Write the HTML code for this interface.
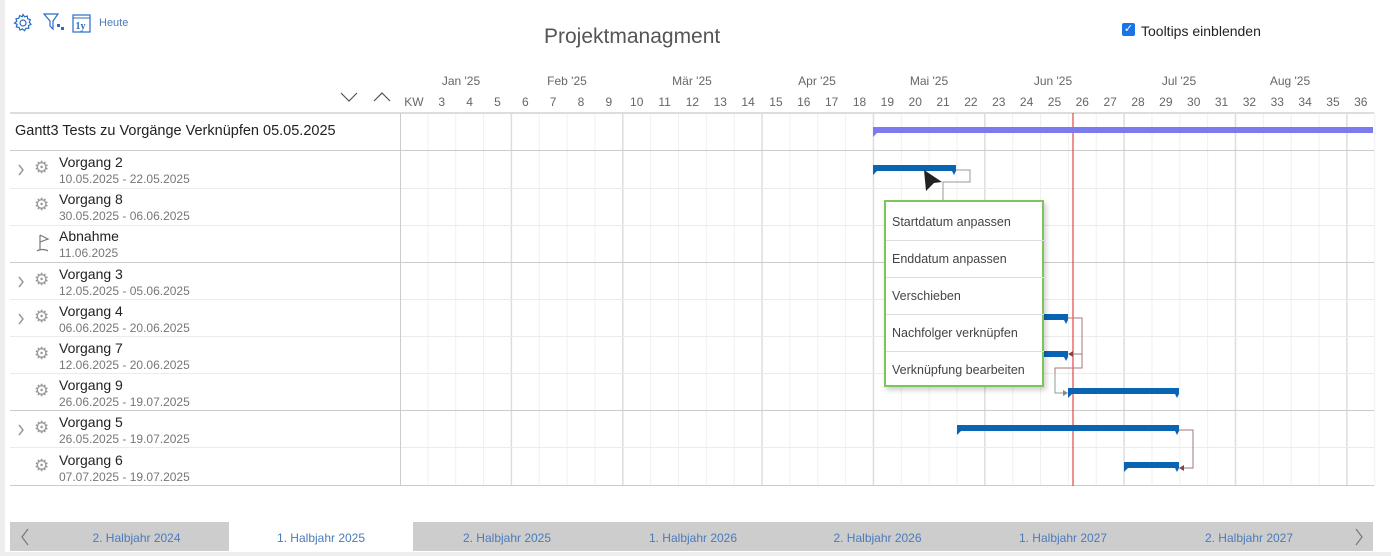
<!DOCTYPE html>
<html><head><meta charset="utf-8"><style>
body{margin:0;width:1391px;height:556px;overflow:hidden;background:#fff;font-family:"Liberation Sans",sans-serif;position:relative}
.a{position:absolute;white-space:nowrap}
.n{font-size:14px;color:#222}
.d{font-size:12px;color:#777}
.mi{position:absolute;left:0;width:158px;height:37px;line-height:37px;padding-left:6px;font-size:12.5px;color:#444;border-top:1px solid #ddd;box-sizing:border-box}
.nav{position:absolute;top:522px;height:29px;line-height:33px;font-size:12px;color:#4a7bbd;text-align:center}
</style></head><body>
<div class="a" style="left:0;top:0;width:5px;height:556px;background:#eee"></div>
<div class="a" style="left:0;top:552px;width:1391px;height:4px;background:#eee"></div>
<svg class="a" style="left:13px;top:13px" width="20" height="20" viewBox="0 0 20 20"><path d="M10 1.5l1.6 2.3 2.7-.8.4 2.8 2.7.9-1.2 2.5 1.8 2.1-2.5 1.3.2 2.8-2.8-.2-1.3 2.5-2.1-1.8-2.5 1.2-.9-2.7-2.8-.4.8-2.7L1.5 10l2.3-1.6-.8-2.7 2.8-.4.9-2.7 2.5 1.2z" fill="none" stroke="#2b6cc4" stroke-width="1.2"/><circle cx="10" cy="10" r="3" fill="none" stroke="#2b6cc4" stroke-width="1.2"/></svg>
<svg class="a" style="left:43px;top:13px" width="22" height="20" viewBox="0 0 22 20"><path d="M1 1h14l-5 7v8l-3-3V8z" fill="none" stroke="#2b6cc4" stroke-width="1.2"/><rect x="14" y="11" width="3" height="3" fill="#2b6cc4"/><rect x="18" y="14" width="3" height="3" fill="#2b6cc4"/></svg>
<svg class="a" style="left:72px;top:13px" width="20" height="20" viewBox="0 0 20 20"><rect x="1" y="2" width="17" height="17" fill="none" stroke="#2b6cc4" stroke-width="1.2"/><line x1="1" y1="5" x2="18" y2="5" stroke="#2b6cc4"/><text x="3.5" y="16" font-size="10" font-weight="bold" fill="#2b6cc4" font-family="Liberation Serif">1y</text></svg>
<div class="a" style="left:99px;top:17px;font-size:11px;color:#4a7bbd">Heute</div>
<div class="a" style="left:544px;top:25px;font-size:21px;color:#555">Projektmanagment</div>
<div class="a" style="left:1122px;top:23px;width:13px;height:13px;background:#1a73e8;border-radius:2px;color:#fff;font-size:11px;line-height:13px;text-align:center">✓</div>
<div class="a" style="left:1141px;top:23px;font-size:14px;color:#222">Tooltips einblenden</div>
<svg class="a" style="left:340px;top:90px" width="55" height="14"><path d="M1 3l8 8 8-8M34 11l8-8 8 8" fill="none" stroke="#555" stroke-width="1.2"/></svg>
<svg class="a" style="left:0;top:0" width="1391" height="556">
<g font-size="12" fill="#666" font-family="Liberation Sans" text-anchor="middle">
<text x="461" y="85">Jan '25</text><text x="567" y="85">Feb '25</text><text x="692" y="85">Mär '25</text><text x="817" y="85">Apr '25</text><text x="929" y="85">Mai '25</text><text x="1053" y="85">Jun '25</text><text x="1179" y="85">Jul '25</text><text x="1290" y="85">Aug '25</text>
<g id="wk"></g>
</g>
<g id="grid"></g>
<line x1="10" y1="113" x2="1374" y2="113" stroke="#ddd" stroke-width="2"/>
<g stroke="#ccc"><line x1="10" y1="150.5" x2="1374" y2="150.5"/><line x1="10" y1="262.5" x2="1374" y2="262.5"/><line x1="10" y1="410.5" x2="1374" y2="410.5"/><line x1="10" y1="485.5" x2="1374" y2="485.5"/></g>
<g stroke="#ebebeb"><line x1="10" y1="188.5" x2="1374" y2="188.5"/><line x1="10" y1="225.5" x2="1374" y2="225.5"/><line x1="10" y1="299.5" x2="1374" y2="299.5"/><line x1="10" y1="336.5" x2="1374" y2="336.5"/><line x1="10" y1="373.5" x2="1374" y2="373.5"/><line x1="10" y1="447.5" x2="1374" y2="447.5"/></g>
<line x1="400.5" y1="113" x2="400.5" y2="486" stroke="#ccc"/>
<line x1="1073" y1="113" x2="1073" y2="486" stroke="#d22" stroke-width="1"/>
<path d="M873 127h500v6H877l-4 4z" fill="#7b7bef"/>
<g fill="#0a64b4">
<path d="M873 165h83v6l-2 4-2-4H877l-4 4z"/>
<path d="M1040 314h28v6l-2 4-2-4h-24z"/>
<path d="M1040 351h28v6l-2 4-2-4h-24z"/>
<path d="M1068 388h111v6l-2 4-2-4H1072l-4 4z"/>
<path d="M957 425h222v6l-2 4-2-4H961l-4 4z"/>
<path d="M1124 462h55v6l-2 4-2-4h-47l-4 4z"/>
</g>
<g fill="none" stroke="#999"><path d="M956 170h14v12h-27v20"/><path d="M1055 373v20h10"/></g>
<g fill="none" stroke="#a77"><path d="M1068 318h14v36h-10"/><path d="M1179 430h14v38h-10"/><path d="M1082 354v14h-27v5"/></g>
<path d="M1068 354l5-3v6zM1179 468l5-3v6z" fill="#844"/><path d="M1068 393l-5-3v6z" fill="#888"/>
<path d="M924 170l18 12-8 1-8 8z" fill="#222"/>
<path d="M28 529l-6 8 6 8M1356 529l6 8-6 8" fill="none" stroke="#777" stroke-width="1.2"/>
</svg>
<script>
var g='',w='';for(var k=0;k<36;k++){var x=400+k*27.85;var m=[4,8,13,17,21,26,30,34].indexOf(k)>=0;if(k>0)g+='<line x1="'+x+'" y1="113" x2="'+x+'" y2="486" stroke="'+(m?'#ddd':'#f0f0f0')+'" stroke-width="'+(m?1.5:1)+'"/>';if(k<35)w+='<text x="'+(x+13.9)+'" y="106">'+(k==0?'KW':k+2)+'</text>';}
document.getElementById('grid').innerHTML=g;document.getElementById('wk').innerHTML=w;
</script>
<div class="a n" style="left:15px;top:123px;font-size:14.5px">Gantt3 Tests zu Vorgänge Verknüpfen 05.05.2025</div>
<div id="rows"></div>
<script>
var R=[['Vorgang 2','10.05.2025 - 22.05.2025',1],['Vorgang 8','30.05.2025 - 06.06.2025',0],['Abnahme','11.06.2025',2],['Vorgang 3','12.05.2025 - 05.06.2025',1],['Vorgang 4','06.06.2025 - 20.06.2025',1],['Vorgang 7','12.06.2025 - 20.06.2025',0],['Vorgang 9','26.06.2025 - 19.07.2025',0],['Vorgang 5','26.05.2025 - 19.07.2025',1],['Vorgang 6','07.07.2025 - 19.07.2025',0]];
var h='';R.forEach(function(r,i){var y=150+i*37.2;
if(r[2]==1)h+='<svg class="a" style="left:17px;top:'+(y+14)+'px" width="8" height="12"><path d="M2 1l4 5-4 5" fill="none" stroke="#999" stroke-width="1.5"/></svg>';
if(r[2]==2)h+='<svg class="a" style="left:35px;top:'+(y+9)+'px" width="16" height="22"><path d="M5 2v15M5 2l8 4-8 3M2 18c3-2 8-2 11 0" fill="none" stroke="#777" stroke-width="1.2"/></svg>';
else h+='<div class="a" style="left:34px;top:'+(y+8)+'px;font-size:17px;color:#999">&#9881;</div>';
h+='<div class="a n" style="left:59px;top:'+(y+4)+'px">'+r[0]+'</div><div class="a d" style="left:59px;top:'+(y+22)+'px">'+r[1]+'</div>';});
document.getElementById('rows').innerHTML=h;
</script>
<div class="a" style="left:884px;top:200px;width:160px;height:187px;border:2px solid #7dc45b;background:#fff;box-sizing:border-box;box-shadow:2px 3px 5px rgba(0,0,0,.2)">
<div class="mi" style="top:2px;border-top:0">Startdatum anpassen</div>
<div class="mi" style="top:38px">Enddatum anpassen</div>
<div class="mi" style="top:75px">Verschieben</div>
<div class="mi" style="top:112px">Nachfolger verknüpfen</div>
<div class="mi" style="top:149px">Verknüpfung bearbeiten</div>
</div>
<div class="a" style="left:10px;top:522px;width:219px;height:29px;background:#cdcdcd;z-index:-1"></div>
<div class="a" style="left:413px;top:522px;width:960px;height:29px;background:#cdcdcd;z-index:-1"></div>
<div class="nav" style="left:44px;width:185px">2. Halbjahr 2024</div>
<div class="nav" style="left:229px;width:184px">1. Halbjahr 2025</div>
<div class="nav" style="left:413px;width:188px">2. Halbjahr 2025</div>
<div class="nav" style="left:601px;width:184px">1. Halbjahr 2026</div>
<div class="nav" style="left:785px;width:185px">2. Halbjahr 2026</div>
<div class="nav" style="left:970px;width:186px">1. Halbjahr 2027</div>
<div class="nav" style="left:1156px;width:186px">2. Halbjahr 2027</div>
</body></html>
